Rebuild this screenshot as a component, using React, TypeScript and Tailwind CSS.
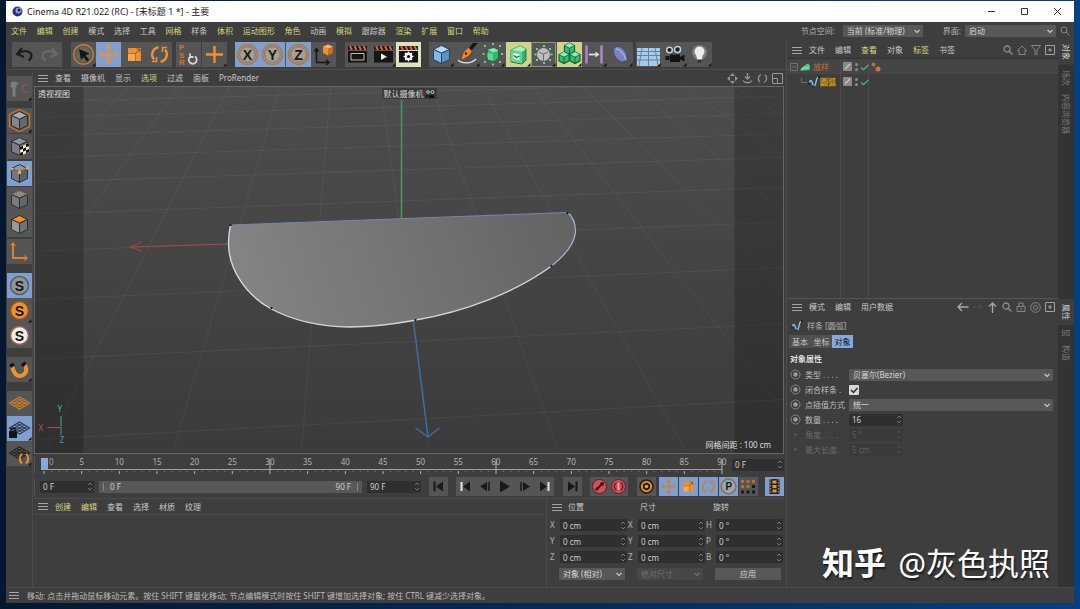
import { ReactNode } from 'react';
import clsx from 'clsx';

type MenuEntry = { label: string; hot?: boolean };

const mainMenu: MenuEntry[] = [
  { label: '文件', hot: true },
  { label: '编辑', hot: true },
  { label: '创建', hot: true },
  { label: '模式' },
  { label: '选择' },
  { label: '工具' },
  { label: '网格', hot: true },
  { label: '样条' },
  { label: '体积', hot: true },
  { label: '运动图形', hot: true },
  { label: '角色', hot: true },
  { label: '动画' },
  { label: '模拟', hot: true },
  { label: '跟踪器' },
  { label: '渲染', hot: true },
  { label: '扩展', hot: true },
  { label: '窗口', hot: true },
  { label: '帮助', hot: true }
];

const viewMenu: MenuEntry[] = [
  { label: '查看' },
  { label: '摄像机' },
  { label: '显示' },
  { label: '选项', hot: true },
  { label: '过滤' },
  { label: '面板' },
  { label: 'ProRender' }
];

const objectMenu: MenuEntry[] = [
  { label: '文件' },
  { label: '编辑' },
  { label: '查看', hot: true },
  { label: '对象' },
  { label: '标签', hot: true },
  { label: '书签' }
];

const materialMenu: MenuEntry[] = [
  { label: '创建', hot: true },
  { label: '编辑', hot: true },
  { label: '查看' },
  { label: '选择' },
  { label: '材质' },
  { label: '纹理' }
];

const attributeMenu: MenuEntry[] = [
  { label: '模式' },
  { label: '编辑' },
  { label: '用户数据' }
];

const ORANGE = '#f0912f';

function Menu({ items, className }: { items: MenuEntry[]; className?: string }) {
  return (
    <nav className={clsx('flex items-center', className ?? 'gap-[10px]')}>
      {items.map((item) => (
        <button
          key={item.label}
          className={clsx(
            'whitespace-nowrap leading-[14px]',
            item.hot ? 'text-[#d3d577]' : 'text-[#c8c8c8]'
          )}
        >
          {item.label}
        </button>
      ))}
    </nav>
  );
}

function Burger() {
  return (
    <button aria-label="面板菜单" className="flex w-[10px] flex-col gap-[2px]">
      <span className="h-px w-full bg-[#a5a5a5]" />
      <span className="h-px w-full bg-[#a5a5a5]" />
      <span className="h-px w-full bg-[#a5a5a5]" />
    </button>
  );
}

function Icon({
  size = 25,
  className,
  children
}: {
  size?: number;
  className?: string;
  children: ReactNode;
}) {
  return (
    <svg
      viewBox={`0 0 ${size} ${size}`}
      width={size}
      height={size}
      fill="none"
      className={clsx('shrink-0', className)}
      aria-hidden="true"
    >
      {children}
    </svg>
  );
}

/* ---------- tool buttons ---------- */

type Tone = 'plain' | 'active' | 'lit' | 'cream' | 'off';

const toneStyle: Record<Tone, string> = {
  plain: 'bg-[#555555]',
  active: 'bg-[#7f9fd0]',
  lit: 'bg-[#d2d28a]',
  cream: 'bg-[#dfe3bd]',
  off: 'bg-[#555555]'
};

function Tool({
  name,
  tone = 'plain',
  more,
  children
}: {
  name: string;
  tone?: Tone;
  more?: boolean;
  children: ReactNode;
}) {
  return (
    <button
      aria-label={name}
      className={clsx('h-[25px] w-[25px] shrink-0', toneStyle[tone])}
    >
      <Icon>
        {children}
        {more && <path d="M24.5 21v3.5H21z" fill="#161616" />}
      </Icon>
    </button>
  );
}

function Cube({
  top,
  left,
  right,
  line = '#26292c'
}: {
  top: string;
  left: string;
  right: string;
  line?: string;
}) {
  return (
    <g stroke={line} strokeWidth=".9" strokeLinejoin="round">
      <path d="M12.5 3.5 20.5 7.5 12.5 11.2 4.5 7.5z" fill={top} />
      <path d="M4.5 7.5 12.5 11.2V21.5L4.5 17.5z" fill={left} />
      <path d="M20.5 7.5 12.5 11.2V21.5L20.5 17.5z" fill={right} />
    </g>
  );
}

function MoveGlyph({ color = ORANGE }: { color?: string }) {
  return (
    <g stroke={color} strokeWidth="2" strokeLinejoin="round">
      <path d="M12.5 5v15M5 12.5h15" />
      <path
        d="M12.5 2 16.5 6.500H8.500zM12.5 23 16.5 18.500H8.500zM2 12.500 6.500 8.500v8zM23 12.500 18.500 8.500v8z"
        fill={color}
        stroke="none"
      />
    </g>
  );
}

function ScaleGlyph() {
  return (
    <g>
      <path d="M6 6h13v13H6z" fill={ORANGE} />
      <path d="M6 12h7v7M13 12l5-5M14.5 7h3.5v3.5" stroke="#8b4a12" strokeWidth="1" />
      <path d="M6 12h7v7H6z" fill="#f9a54c" />
    </g>
  );
}

function RotateGlyph({ color = ORANGE }: { color?: string }) {
  return (
    <g stroke={color} strokeWidth="2.4">
      <path d="M11.500 5.200a7.500 7.500 0 0 0-4.500 12.300M13.500 19.800a7.500 7.500 0 0 0 4.500-12.300" />
      <path d="M5 19.500h4.500V15M20 5.500h-4.500V10" strokeWidth="1.600" />
    </g>
  );
}

function AxisLetter({ letter }: { letter: string }) {
  return (
    <g>
      <circle cx="12.5" cy="12.5" r="10" stroke="#b57838" strokeWidth="1.5" />
      <circle cx="12.5" cy="12.5" r="7.8" fill="#a9a08f" stroke="#8f6d42" />
      <text
        x="12.5"
        y="17.5"
        textAnchor="middle"
        fontSize="14"
        fontWeight="700"
        fontFamily="Liberation Sans, sans-serif"
        fill="#16181c"
      >
        {letter}
      </text>
    </g>
  );
}

function Clapper({ children }: { children: ReactNode }) {
  return (
    <g>
      <path d="M3 9h19v11.5H3z" fill="#151515" />
      <path d="M3 4h19v4H3z" fill="#2a1a15" />
      <path d="M5 4l2 4M9.5 4l2 4M14 4l2 4M18.5 4l2 4" stroke="#d8694a" strokeWidth="1.8" />
      {children}
    </g>
  );
}

function CameraGlyph() {
  return (
    <g>
      <circle cx="7.5" cy="8" r="2.8" fill="#222" stroke="#b9d2e4" strokeWidth="1.5" />
      <circle cx="15.5" cy="7.5" r="3" fill="#222" stroke="#b9d2e4" strokeWidth="1.5" />
      <path d="M8 12.5h10v7.5H8zM18 15l4.5-2.5v7L18 17.5zM3.5 14h4v4h-4z" fill="#141414" />
    </g>
  );
}

function Snap({ ring, fill }: { ring: string; fill: string }) {
  return (
    <g>
      <circle cx="12.5" cy="12.5" r="9" fill={fill} stroke={ring} strokeWidth="1.5" />
      <text
        x="12.5"
        y="17.5"
        textAnchor="middle"
        fontSize="14"
        fontWeight="700"
        fontFamily="Liberation Sans, sans-serif"
        fill="#131313"
      >
        S
      </text>
    </g>
  );
}

function Mesh({ color }: { color: string }) {
  return (
    <path
      d="M2.5 12 12.5 6l10 6-10 6zM5 10.5l10 6M7.5 9l10 6M10 7.5l10 6M5 13.5l10-6M7.5 15l10-6M10 16.5l10-6"
      stroke={color}
      strokeWidth="1.2"
    />
  );
}

function Toolbar() {
  return (
    <div className="flex h-[31px] items-center border-b border-[#4c4c4c] pl-[6px]">
      <div className="flex bg-[#555555]">
        <Tool name="撤销">
          <path d="M10 6 5 12l7 3M5.5 12c6-5 14-3 14 2 0 2-1 3-3 4.5" stroke="#1c1c1c" strokeWidth="2.2" />
        </Tool>
        <Tool name="重做" tone="off">
          <path d="M15 6l5 6-7 3M19.5 12c-6-5-14-3-14 2 0 2 1 3 3 4.5" stroke="#6a6a6a" strokeWidth="2.2" />
        </Tool>
      </div>
      <div className="ml-[9px] flex w-[101px] justify-between bg-[#555555]">
        <Tool name="实时选择" more>
          <circle cx="12.5" cy="12.5" r="9.8" stroke="#c77f35" strokeWidth="1.5" />
          <circle cx="12.5" cy="12.5" r="7.8" fill="#6b6459" />
          <path d="M8 7l10.5 4.5-4 2 3.5 4-2 2-3.5-4.5-2.5 3z" fill="#141414" />
        </Tool>
        <Tool name="移动" tone="active">
          <MoveGlyph color="#dd9448" />
        </Tool>
        <Tool name="缩放">
          <ScaleGlyph />
        </Tool>
        <Tool name="旋转">
          <RotateGlyph />
        </Tool>
      </div>
      <div className="ml-1 flex">
        <Tool name="重置变换">
          <g fontFamily="Liberation Sans, sans-serif" fontSize="8" fontWeight="700" fill="#d0752c">
            <text x="3" y="8">P</text>
            <text x="3" y="15.5">S</text>
            <text x="3" y="23">R</text>
          </g>
          <path d="M14.5 14.5a4 4 0 1 0 4.5 0M14 11.5v3.5h3.5" stroke="#d6d6d6" strokeWidth="1.8" />
        </Tool>
      </div>
      <div className="ml-px flex">
        <Tool name="坐标系统" more>
          <path d="M12.5 4v17M4 12.5h17" stroke={ORANGE} strokeWidth="2.4" />
        </Tool>
      </div>
      <div className="ml-2 flex w-[101px] justify-between bg-[#4a5564]">
        <Tool name="锁定 X 轴" tone="active">
          <AxisLetter letter="X" />
        </Tool>
        <Tool name="锁定 Y 轴" tone="active">
          <AxisLetter letter="Y" />
        </Tool>
        <Tool name="锁定 Z 轴" tone="active">
          <AxisLetter letter="Z" />
        </Tool>
        <Tool name="坐标系">
          <path d="M5.5 7v13.5H17M3.5 9.5 5.5 6.5l2 3M15 18l3 2.5-3 2.5" stroke="#171717" strokeWidth="1.5" />
          <path d="M17 2.5l5 2-5 2.5-5-2.5z" fill="#ffb45f" />
          <path d="M12 4.5 17 7v6.5l-5-2.5z" fill="#f0912f" />
          <path d="M22 4.5 17 7v6.5l5-2.5z" fill="#c96e1a" />
        </Tool>
      </div>
      <div className="ml-[9px] flex w-[76px] justify-between bg-[#555555]">
        <Tool name="渲染活动视图">
          <Clapper>
            <path d="M6 11.5h13v6.5H6z" stroke="#c9b9ad" />
          </Clapper>
        </Tool>
        <Tool name="渲染到图片查看器" more>
          <Clapper>
            <path d="M10 11.5l6 3.2-6 3.3z" fill="#f2f2f2" />
          </Clapper>
        </Tool>
        <Tool name="编辑渲染设置" tone="cream">
          <Clapper>
            <circle cx="12.5" cy="14.5" r="3" stroke="#fff" strokeWidth="2" />
            <path d="M12.5 9.5v10M7.5 14.5h10M9 11l7 7M16 11l-7 7" stroke="#fff" strokeWidth="1.2" />
            <circle cx="12.5" cy="14.5" r="1.6" fill="#151515" />
          </Clapper>
        </Tool>
      </div>
      <div className="ml-2 flex w-[204px] justify-between bg-[#555555]">
        <Tool name="立方体" more>
          <Cube top="#b3dcf8" left="#7db8e8" right="#5794cb" line="#24425c" />
        </Tool>
        <Tool name="样条画笔" more>
          <path d="M14 6l4-5h5l-7 8z" fill="#171717" />
          <path d="M13.5 5.5l3.5 3.5c-1 4-5 7-11 9 1-6 3-10 7.5-12.5z" fill="#e8873a" stroke="#5d3110" strokeWidth=".7" />
          <circle cx="11" cy="11.5" r="1.2" fill="#3b1f0a" />
          <path d="M3 18c4 4 13 4 18-1" stroke="#dfe6ea" strokeWidth="1.2" />
        </Tool>
        <Tool name="细分曲面" more>
          <path d="M8 7.5 14 6l4.5 2.5V16l-4 3.5-6.5-1.5-1.5-4z" fill="#35b56d" stroke="#1b6f45" />
          <path d="M8 7.5 14 6l4.5 2.5L13 10.5z" fill="#86e8ac" />
          <path d="M7.5 10.5l5.5 1.5v7l-5-1.5z" fill="#5fd692" />
          <path d="M4 4h2M19 4h2M4 20h2M19 20h2M12 2h2M12 22.5h2M2.5 12h2M21 12h2" stroke="#77c794" strokeWidth="1.8" />
        </Tool>
        <Tool name="挤压" tone="lit" more>
          <path d="M5 8l9-4 6 3v11l-4 4-11-2z" fill="#2fb36d" stroke="#1c7a49" />
          <path d="M5 8l11 2 4-3-6-3z" fill="#a5f0c0" />
          <path d="M5 8l11 2v11.500L5 19.500z" fill="#5fd692" />
          <path d="M7.500 11l6 1v6l-6-1z" fill="#e8fff0" />
          <path d="M8 13.500l2.500 2 3-1.500" stroke="#14663b" strokeWidth="1.200" />
        </Tool>
        <Tool name="体积生成" more>
          <circle cx="12.5" cy="12.5" r="6.5" fill="#bdbdbd" />
          <path d="M8 10l4.5 2 4.5-2M12.5 12v7" stroke="#6b6b6b" />
          <path d="M12 4h2M5 7h2M18 7h2M3.5 12.5h2M19.5 12.5h2M5 18h2M18 18h2M12 21h2" stroke="#5fdc93" strokeWidth="2" />
          <path d="M.5.5h24v24H.5z" stroke="#8f9a78" />
        </Tool>
        <Tool name="克隆" tone="lit" more>
          {['translate(5.5 0) scale(.56)', 'translate(0 9) scale(.56)', 'translate(11 9) scale(.56)'].map((t) => (
            <g key={t} transform={t}>
              <path d="M12.5 2l9 4.5v11l-9 5-9-5v-11z" fill="#35bd74" stroke="#165e38" strokeWidth="2" />
              <path d="M12.5 2l9 4.5-9 4.5-9-4.5z" fill="#8ff0b5" />
              <path d="M3.5 6.5l9 4.5v11.5M12.5 11l9-4.5" stroke="#165e38" strokeWidth="1.6" />
            </g>
          ))}
        </Tool>
        <Tool name="域" more>
          <path d="M4.500 3.500v18M19.500 3.500v18" stroke="#b083d3" strokeWidth="2.500" />
          <path d="M7 12.5h8" stroke="#dcdcdc" strokeWidth="1.8" />
          <path d="M13.500 9.500l4 3-4 3z" fill="#dcdcdc" />
        </Tool>
        <Tool name="变形器" more>
          <path d="M7 5c4-2 8 1 10.5 5 2 3.5 2 8-.5 9.5-3 1.5-7-1-9.5-4.5C5 11.5 4.5 6.5 7 5z" fill="#7584bb" stroke="#3f4a7c" />
          <path d="M8 7c4 0 9 6 10 11" stroke="#a2afdd" strokeWidth="1.5" />
        </Tool>
      </div>
      <div className="ml-[3px] flex w-[76px] justify-between bg-[#555555]">
        <Tool name="地面" more>
          <path d="M1 6h23v18H1z" fill="#a9cbe9" />
          <path d="M1 9.5h23M1 13.5h23M1 18h23M6 6 3 24M12.5 6v18M19 6l3 18" stroke="#5d82a7" />
        </Tool>
        <Tool name="摄像机" more>
          <CameraGlyph />
        </Tool>
        <Tool name="灯光" more>
          <circle cx="12.5" cy="10.5" r="7.5" fill="#7c7c7c" />
          <path d="M12.5 4.5a5 5 0 0 1 3.5 8.5l-1.5 5h-4L9 13a5 5 0 0 1 3.5-8.5z" fill="#ececec" />
          <path d="M10.5 17.5h4v3h-4z" fill="#333" />
        </Tool>
      </div>
    </div>
  );
}

function Palette() {
  return (
    <aside className="flex w-[27px] shrink-0 flex-col items-start border-r border-[#4a4a4a] pl-px pt-[6px]">
      <Tool name="转为可编辑对象" tone="off" more>
        <path d="M3.5 8.5c0-4 8-4 8 0h-2v3h-1v9h-3v-9h-2z" fill="#7d7d7d" />
        <path d="M21 9a4 4 0 1 0 0 7" stroke="#735c58" strokeWidth="2" />
      </Tool>
      <div className="mt-[7px] flex flex-col gap-px">
        <Tool name="模型" more>
          <path d="M12.5 1.5 22.5 6.5v12l-10 5-10-5v-12z" stroke="#c5752c" strokeWidth="1.3" />
          <Cube top="#a6acb0" left="#80868a" right="#64696c" />
        </Tool>
        <Tool name="纹理">
          <Cube top="#8c9296" left="#777d80" right="#64696c" />
          <g transform="translate(13 13) skewY(-24)">
            <path d="M0 0h9v9H0z" fill="#f0f0f0" stroke={ORANGE} strokeWidth=".6" />
            <path d="M0 0h3v3H0zM6 0h3v3H6zM3 3h3v3H3zM0 6h3v3H0zM6 6h3v3H6z" fill="#111" />
          </g>
        </Tool>
      </div>
      <div className="mt-[2px] flex flex-col">
        <Tool name="点" tone="active">
          <Cube top="#8f979e" left="#727a80" right="#5b6267" />
          <path d="M4.5 7.5l8 3.7L20.5 7" stroke="#a5722f" />
          <path d="M19 5.5h3v3h-3zM11 10h3v3h-3zM4 7h2v2H4z" fill="#f5a742" />
        </Tool>
        <div className="mt-px flex flex-col">
          <Tool name="边">
            <Cube top="#868b8d" left="#777c7e" right="#62676a" />
            <path d="M4.5 7.5 12.5 3.5 20.5 7.5" stroke="#a5682d" />
          </Tool>
        </div>
        <Tool name="多边形">
          <Cube top="#f58b1e" left="#969b9e" right="#6d7275" />
        </Tool>
      </div>
      <div className="mt-[2px] flex">
        <Tool name="启用轴心">
          <path d="M6 4v15h14" stroke="#d98333" strokeWidth="2" />
          <path d="M3.5 7 6 3.5 8.5 7M17 16.5l3.5 2.5-3.5 2.5" stroke="#d98333" />
        </Tool>
      </div>
      <div className="mt-[9px] flex flex-col">
        <Tool name="视窗独显关闭" tone="active">
          <Snap ring="#55606b" fill="#8f9496" />
        </Tool>
        <Tool name="视窗独显" more>
          <Snap ring="#8c5420" fill="#f0912f" />
        </Tool>
        <Tool name="自动独显">
          <Snap ring="#a05c55" fill="#efefe8" />
        </Tool>
      </div>
      <div className="mt-[9px] flex">
        <Tool name="启用捕捉" more>
          <path d="M5 9c2 8 5.5 11.5 10 9.5s6-6 2-11.5" stroke="#f0912f" strokeWidth="4" />
          <path d="M3 9.5l4-2.5M15 9l3.5-3.5" stroke="#161616" strokeWidth="3.5" />
        </Tool>
      </div>
      <div className="mt-[9px] flex flex-col">
        <Tool name="工作平面">
          <Mesh color="#d07d2c" />
        </Tool>
        <Tool name="锁定工作平面" tone="active" more>
          <Mesh color="#2d3947" />
          <path d="M2 15h8v7H2z" fill="#12151a" />
          <path d="M4 15v-2.5h4V15" stroke="#12151a" strokeWidth="1.5" />
        </Tool>
        <Tool name="平直工作平面" more>
          <Mesh color="#242424" />
          <path d="M15 13c-3 2-3 7 0 9.5M19 13c3 2 3 7 0 9.5" stroke="#f0912f" strokeWidth="2" />
        </Tool>
      </div>
    </aside>
  );
}

/* ---------- viewport ---------- */

const gridRows = [420, 342, 284, 237, 201, 170, 146, 125, 107, 92];
const gridCols = Array.from({ length: 17 }, (_, i) => i - 6);

function Viewport() {
  return (
    <div className="relative min-h-[300px] flex-1 overflow-hidden border border-[#666666] bg-[#444444]">
      <svg
        viewBox="35 87 749 366"
        preserveAspectRatio="xMidYMid slice"
        className="absolute inset-0 h-full w-full"
        fill="none"
      >
        <defs>
          <linearGradient id="backdrop" x1="0" y1="0" x2="0" y2="1">
            <stop offset="0" stopColor="#4d4d4d" />
            <stop offset="1" stopColor="#3b3b3b" />
          </linearGradient>
          <linearGradient id="face" x1="0" y1=".1" x2="1" y2="0">
            <stop offset="0" stopColor="#838383" />
            <stop offset=".5" stopColor="#737373" />
            <stop offset="1" stopColor="#626262" />
          </linearGradient>
        </defs>
        <rect x="35" y="87" width="749" height="366" fill="url(#backdrop)" />
        <g stroke="#ffffff" strokeOpacity=".05">
          {gridRows.map((y) => {
            const slope = -0.02 - 0.00008 * y;
            return (
              <line key={y} x1={35} y1={y - slope * 365} x2={784} y2={y + slope * 384} />
            );
          })}
          {gridCols.map((k) => (
            <line key={k} x1={350} y1={-150} x2={302 + 128 * k} y2={450} />
          ))}
        </g>
        <path d="M35 87h49v366H35zM735 87h49v366h-49z" fill="#000" fillOpacity=".2" />
        <path d="M402 100v118" stroke="#479a5e" strokeWidth="1.5" />
        <path d="M229 244 131 247M142 242l-11 5 11 4" stroke="#a34a48" />
        <path
          d="M231 225 568 212.5C573 216 576 223 576 232C575 243 566 255 552 266C515 293 465 312 414 320.5C392 324.5 370 327 350 327C318 326.5 292 320 271 308.5C245 294 229 268 229 243C229 236 230 230 231 225Z"
          fill="url(#face)"
        />
        <path d="M231 225 568 212.5" stroke="#7587b3" />
        <path
          d="M568 212.5C573 216 576 223 576 232C575 243 566 255 552 266"
          stroke="#a9b9dc"
          strokeWidth="1.2"
        />
        <path
          d="M552 266C515 293 465 312 414 320.5C392 324.5 370 327 350 327C318 326.5 292 320 271 308.5C245 294 229 268 229 243C229 236 230 230 231 225"
          stroke="#d4d6dc"
          strokeWidth="1.4"
        />
        <path d="M230 224h2v2h-2zM567 212h2v2h-2zM551 265h2v2h-2zM415 319h2v2h-2zM271 307h2v2h-2z" fill="#1d1d1d" />
        <path d="M414 321 428.5 437M416 428l12.5 9 11.5-9" stroke="#3d73ab" strokeWidth="1.3" />
        <path d="M61.5 426.5V416" stroke="#4cae6b" />
        <path d="M61 427.5H48" stroke="#b84b4b" />
        <path d="M61.5 427v8" stroke="#4a8ac0" />
        <g fontFamily="Noto Sans, sans-serif" fontSize="8">
          <text x="58" y="412" fill="#4fbd70">Y</text>
          <text x="39" y="431" fill="#c24b4b">X</text>
          <text x="60" y="443" fill="#4b93cf">Z</text>
        </g>
      </svg>
      <span className="absolute left-[3px] top-px text-[#dedede]">透视视图</span>
      <div className="absolute inset-x-0 top-px flex justify-center">
        <span className="flex items-center gap-px bg-[#3a3a3a] px-[2px] leading-[11px] text-[#d8d8d8]">
          默认摄像机
          <Icon size={10}>
            <circle cx="3" cy="3" r="1.3" stroke="#a9cfe6" />
            <circle cx="7.5" cy="3" r="1.5" stroke="#a9cfe6" />
            <path d="M4 6h5v3H4zM1 6h2v2H1z" fill="#0f0f0f" />
          </Icon>
        </span>
      </div>
      <span className="absolute bottom-[2px] right-3 text-[#dedede]">网格间距 : 100 cm</span>
    </div>
  );
}

/* ---------- form bits ---------- */

function NumberField({
  id,
  label,
  value,
  disabled,
  className
}: {
  id?: string;
  label?: string;
  value: string;
  disabled?: boolean;
  className?: string;
}) {
  return (
    <span
      className={clsx(
        'flex h-3 items-center',
        disabled ? 'bg-[#3a3a3a] text-[#5f5f5f]' : 'bg-[#2f2f2f] text-[#d0d0d0]',
        className
      )}
    >
      <input
        id={id}
        aria-label={label}
        defaultValue={value}
        disabled={disabled}
        className="h-full w-full min-w-0 bg-transparent px-[3px] outline-none"
      />
      <Icon size={8} className="h-[11px]">
        <path d="M2 2.5 4 .5l2 2M2 5.5l2 2 2-2" stroke={disabled ? '#505050' : '#777777'} />
      </Icon>
    </span>
  );
}

function Dropdown({
  id,
  label,
  value,
  disabled,
  className
}: {
  id?: string;
  label?: string;
  value: string;
  disabled?: boolean;
  className?: string;
}) {
  return (
    <span className={clsx('relative flex h-3', className)}>
      <select
        id={id}
        aria-label={label}
        disabled={disabled}
        className={clsx(
          'h-full w-full appearance-none rounded-[1px] px-1 leading-3 outline-none',
          disabled ? 'bg-[#474747] text-[#6f6f6f]' : 'bg-[#585858] text-[#d6d6d6]'
        )}
      >
        <option>{value}</option>
      </select>
      <Icon size={8} className="pointer-events-none absolute right-[2px] top-[2px]">
        <path d="M1.5 3 4 5.5 6.5 3" stroke={disabled ? '#6f6f6f' : '#c8c8c8'} strokeWidth="1.2" />
      </Icon>
    </span>
  );
}

/* ---------- timeline ---------- */

const frames = Array.from({ length: 91 }, (_, i) => i);
const frameLabels = Array.from({ length: 19 }, (_, i) => i * 5);

function Ruler() {
  return (
    <div className="flex h-[21px] items-center">
      <div className="h-4 w-[2px] border-l border-[#555555]" />
      <div className="relative ml-2 mr-[6px] h-[21px] flex-1">
        <svg className="absolute inset-x-0 bottom-0 h-full w-full overflow-visible">
          <line x1="-3" y1="15.5" x2="100%" y2="15.5" stroke="#a0a0a0" />
          {frames.map((f) => (
            <line
              key={f}
              x1={`${(f / 90) * 100}%`}
              x2={`${(f / 90) * 100}%`}
              y1={f && f % 30 === 0 ? 5 : 17}
              y2={f % 5 === 0 ? 20 : 18}
              stroke={f % 5 === 0 ? '#b4b4b4' : '#7c7c7c'}
            />
          ))}
          <rect x="-3" y="4" width="7" height="12" fill="#86a9dc" />
        </svg>
        <div className="relative flex justify-between pt-[2px] text-[#b4b4b4]">
          {frameLabels.map((f) => (
            <span key={f} className={clsx('flex w-0', f > 0 && 'justify-center')}>
              {/* frame 0 sits beside the playhead */}
              <span className={clsx(f === 0 && 'pl-[5px] text-[#8fa3c2]')}>{f}</span>
            </span>
          ))}
        </div>
      </div>
      <NumberField label="当前帧" value="0 F" className="ml-1 w-[52px]" />
    </div>
  );
}

function Key({
  name,
  tone = 'plain',
  children
}: {
  name: string;
  tone?: Tone;
  children: ReactNode;
}) {
  return (
    <button
      aria-label={name}
      className={clsx('flex h-[19px] flex-1 items-center justify-center', toneStyle[tone])}
    >
      <Icon size={19}>{children}</Icon>
    </button>
  );
}

function Transport() {
  return (
    <div className="flex h-[23px] items-center">
      <div className="mr-1 h-4 w-[2px] border-l border-[#555555]" />
      <NumberField label="起始帧" value="0 F" className="w-[54px]" />
      <div className="ml-[5px] flex h-3 flex-1 items-center justify-between bg-[#585858] px-1 text-[#cccccc]">
        <span className="border-l border-[#888888] pl-[6px] leading-2">0 F</span>
        <span className="border-r border-[#888888] pr-[6px] leading-2">90 F</span>
      </div>
      <NumberField label="结束帧" value="90 F" className="ml-[5px] w-[54px]" />
      <div className="ml-2 flex w-[18px]">
        <Key name="转到开始">
          <path d="M14 4.5v10l-7-5z" fill="#191919" />
          <path d="M5.5 4.5v10" stroke="#191919" strokeWidth="2" />
        </Key>
      </div>
      <div className="ml-[9px] flex w-[98px]">
        <Key name="上一关键帧">
          <path d="M14 4.5v10l-7-5z" fill="#191919" />
          <path d="M5.5 5v9" stroke="#e6e6e6" strokeWidth="2" />
        </Key>
        <Key name="上一帧">
          <path d="M11 5v9L4 9.5z" fill="#191919" />
          <path d="M13 5v9" stroke="#191919" strokeWidth="1.5" />
        </Key>
        <Key name="播放">
          <path d="M5 3.5v12l10-6z" fill="#191919" />
        </Key>
        <Key name="下一帧">
          <path d="M8 5v9l7-4.5z" fill="#191919" />
          <path d="M6 5v9" stroke="#191919" strokeWidth="1.5" />
        </Key>
        <Key name="下一关键帧">
          <path d="M5 4.5v10l7-5z" fill="#191919" />
          <path d="M13.5 5v9" stroke="#e6e6e6" strokeWidth="2" />
        </Key>
      </div>
      <div className="ml-[9px] flex w-[18px]">
        <Key name="转到结束">
          <path d="M5 4.5v10l7-5z" fill="#191919" />
          <path d="M13.5 4.5v10" stroke="#191919" strokeWidth="2" />
        </Key>
      </div>
      <div className="ml-[9px] flex w-[38px]">
        <Key name="记录活动对象">
          <circle cx="9.5" cy="9.5" r="7" fill="#d94f57" stroke="#5c1f22" />
          <path d="M6.5 12.5l5-5" stroke="#3a1517" strokeWidth="2" />
          <circle cx="12" cy="7" r="2" fill="#3a1517" />
          <circle cx="6.8" cy="12" r="1.5" fill="#3a1517" />
        </Key>
        <Key name="自动关键帧">
          <circle cx="9.5" cy="9.5" r="7" fill="#d94f57" stroke="#5c1f22" />
          <path d="M7.5 5.5c-3 2-3 6 0 8M11.5 5.5c3 2 3 6 0 8" stroke="#5c1f22" strokeWidth="1.4" />
          <path d="M9.5 6v7" stroke="#f6b9b9" strokeWidth="1.5" />
        </Key>
      </div>
      <div className="ml-[9px] flex w-[18px]">
        <Key name="关键帧选集">
          <circle cx="9.5" cy="9.5" r="6.5" fill="#d68c35" stroke="#2a1c0e" strokeWidth="1.5" />
          <path d="M9.5 5.5l3.5 2v4l-3.5 2-3.5-2v-4z" fill="#251a10" />
          <circle cx="9.5" cy="9.5" r="1.8" fill="#e9a14c" />
        </Key>
      </div>
      <div className="ml-1 flex w-[98px] gap-px">
        <Key name="位置" tone="active">
          <g transform="scale(.76)">
            <MoveGlyph color="#c08446" />
          </g>
        </Key>
        <Key name="缩放" tone="active">
          <g transform="scale(.76)">
            <ScaleGlyph />
          </g>
        </Key>
        <Key name="旋转" tone="active">
          <g transform="scale(.76)">
            <RotateGlyph color="#c08446" />
          </g>
        </Key>
        <Key name="参数" tone="active">
          <circle cx="9.5" cy="9.5" r="7.5" stroke="#9f6a31" strokeWidth="1.3" />
          <circle cx="9.5" cy="9.5" r="5.8" fill="#9fa7ae" />
          <text
            x="9.8"
            y="13"
            textAnchor="middle"
            fontSize="10"
            fontWeight="700"
            fontFamily="Liberation Sans, sans-serif"
            fill="#14171c"
          >
            P
          </text>
        </Key>
        <Key name="点级别动画">
          <path d="M2 4.5h15" stroke="#b36f2e" strokeWidth="3" strokeDasharray="3 2.5" />
          <path d="M2 9.5h9" stroke="#b36f2e" strokeWidth="3" strokeDasharray="3 2.5" />
          <path d="M13 9.5h3M2 15h15" stroke="#191919" strokeWidth="3" strokeDasharray="3 2.5" />
        </Key>
      </div>
      <div className="ml-[8px] flex w-[19px]">
        <Key name="播放模式" tone="active">
          <path d="M4.5 2h10v15h-10z" fill="#272014" />
          <path d="M7.5 3.5h4v3h-4zM7.5 8h4v3h-4zM7.5 12.5h4v3h-4z" fill="#d99a42" />
          <path d="M5.7 2v15M13.3 2v15" stroke="#d99a42" strokeDasharray="1.5 1.5" />
        </Key>
      </div>
    </div>
  );
}

const coordinateRows = [
  ['X', '0 cm', 'X', '0 cm', 'H', '0 °'],
  ['Y', '0 cm', 'Y', '0 cm', 'P', '0 °'],
  ['Z', '0 cm', 'Z', '0 cm', 'B', '0 °']
];

function Coordinates() {
  return (
    <section className="w-[238px] shrink-0 border-l border-[#4d4d4d] pl-[3px]">
      <div className="flex h-4 items-center text-[#c8c8c8]">
        <div className="flex w-[90px] items-center gap-[6px] pl-[2px]">
          <Burger />
          <span>位置</span>
        </div>
        <span className="w-[73px]">尺寸</span>
        <span>旋转</span>
      </div>
      <div className="mt-1 flex flex-col gap-1">
        {coordinateRows.map((row) => (
          <div key={row[0]} className="flex items-center text-[#b5b5b5]">
            {[0, 2, 4].map((i) => (
              <label key={i} className="flex w-[78px] items-center">
                <span className="w-[10px]">{row[i]}</span>
                <NumberField value={row[i + 1]} className="w-[67px]" />
              </label>
            ))}
          </div>
        ))}
      </div>
      <div className="mt-[5px] flex gap-3 pl-[9px]">
        <Dropdown label="坐标模式" value="对象 (相对)" className="w-[66px]" />
        <Dropdown label="尺寸模式" value="绝对尺寸" disabled className="w-[66px]" />
        <button className="h-3 w-[66px] rounded-[1px] bg-[#585858] leading-3 text-[#d0d0d0]">应用</button>
      </div>
    </section>
  );
}

/* ---------- right column ---------- */

function SplineIcon() {
  return (
    <Icon size={12}>
      <path d="M1 7.5C2.5 3 3.5 4 4.5 7.5S7 11 8 6s1.5-4.5 3.500-5" stroke="#8fc3e6" strokeWidth="1.300" />
      <path d="M0 6.5h2v2H0zM10 0h2v2h-2zM4.5 9.5h2v2h-2z" fill="#14232e" />
    </Icon>
  );
}

function RowFlags() {
  return (
    <span className="flex items-center gap-[3px]">
      <Icon size={9}>
        <path d="M0 0h9v9H0z" fill="#8a8a8a" />
        <path d="M2 7l5-5" stroke="#c9c9c9" strokeWidth="1.2" />
      </Icon>
      <span className="flex w-[3px] flex-col gap-[2px]">
        <span className="h-[3px] rounded-full bg-[#8b8b8b]" />
        <span className="h-[3px] rounded-full bg-[#8b8b8b]" />
      </span>
      <Icon size={8}>
        <path d="M0 4.5 2.5 6.5 7.5 2" stroke="#45b276" strokeWidth="1.4" />
      </Icon>
    </span>
  );
}

function ObjectManager() {
  return (
    <section className="flex min-h-[200px] flex-1 flex-col border-b border-[#555555] pt-[3px]">
      <div className="flex h-[17px] items-center border-b border-[#343434] pl-[5px] pr-[3px]">
        <Burger />
        <div className="ml-[7px] flex-1">
          <Menu items={objectMenu} />
        </div>
        <div className="flex gap-1">
          <Icon size={10}>
            <circle cx="4" cy="4" r="3" stroke="#8a8a8a" strokeWidth="1.3" />
            <path d="M6 6l3.5 3.5" stroke="#8a8a8a" strokeWidth="1.5" />
          </Icon>
          <Icon size={10}>
            <path d="M.5 5.5 5 1l4.5 4.5H8v4H2v-4z" stroke="#858585" />
          </Icon>
          <Icon size={10}>
            <path d="M.5.5h9L6 5v4.5H4V5z" stroke="#858585" />
          </Icon>
          <Icon size={10}>
            <path d="M.5.5h9v9h-9zM3 5h4M5 3v4" stroke="#a0a0a0" />
          </Icon>
        </div>
      </div>
      <div className="flex flex-1">
        <ul className="w-[54px] border-r border-[#4a4a4a]">
          <li className="flex h-[15px] items-center gap-[2px] bg-[#454545] pl-[3px] text-[#c26f26]">
            <Icon size={8}>
              <path d="M.5.5h7v7h-7zM2 4h4" stroke="#707070" />
            </Icon>
            <Icon size={10}>
              <path d="M0 8.5c1-2.5 4-5.5 8-7L10 3.5 9.5 8 5 8.500z" fill="#46c986" />
              <path d="M1 8c2-2 5-3 8-2" stroke="#a5efc6" />
            </Icon>
            <span className="ml-px">放样</span>
          </li>
          <li className="flex h-[15px] items-center pl-[13px]">
            <Icon size={8}>
              <path d="M1.5 0v4.5H7" stroke="#707070" />
            </Icon>
            <SplineIcon />
            <span className="bg-[#5f4b16] leading-[10px] text-[#e9bd3a]">圆弧</span>
          </li>
        </ul>
        <ul className="w-[28px] border-r border-[#4a4a4a]">
          <li className="flex h-[15px] items-center bg-[#454545] pl-[2px]">
            <RowFlags />
          </li>
          <li className="flex h-[15px] items-center pl-[2px]">
            <RowFlags />
          </li>
        </ul>
        <div className="flex-1">
          <div className="flex h-[15px] items-center bg-[#454545] pl-[2px]">
            <Icon size={10}>
              <circle cx="2.5" cy="2.5" r="2" fill="#c46a33" />
              <circle cx="7" cy="7" r="2.5" fill="#d0743a" />
            </Icon>
          </div>
        </div>
      </div>
    </section>
  );
}

function Bullet({ muted }: { muted?: boolean }) {
  return (
    <Icon size={11}>
      {muted ? (
        <circle cx="5.5" cy="5.5" r="1.5" fill="#5a5a5a" />
      ) : (
        <>
          <circle cx="5.5" cy="5.5" r="4.5" stroke="#858585" />
          <circle cx="5.5" cy="5.5" r="2.2" fill="#9c9c9c" />
        </>
      )}
    </Icon>
  );
}

function AttributeRow({
  id,
  label,
  muted,
  children
}: {
  id: string;
  label: string;
  muted?: boolean;
  children: ReactNode;
}) {
  return (
    <div className="flex h-[15px] items-center pl-[3px] pr-[5px]">
      <Bullet muted={muted} />
      <label
        htmlFor={id}
        className={clsx(
          'ml-1 w-[44px] whitespace-nowrap',
          muted ? 'text-[#6a6a6a]' : 'text-[#bdbdbd]'
        )}
      >
        {label}
      </label>
      {children}
    </div>
  );
}

function AttributeManager() {
  return (
    <section className="min-h-[288px]">
      <div className="flex h-4 items-center pl-[5px] pr-[3px]">
        <Burger />
        <div className="ml-[7px] flex-1">
          <Menu items={attributeMenu} />
        </div>
        <div className="flex items-center gap-1">
          <Icon size={12}>
            <path d="M11.5 6H1M5 2 1 6l4 4" stroke="#a8a8a8" strokeWidth="1.4" />
          </Icon>
          <Icon size={10}>
            <path d="M0 5h9M6 2l3 3-3 3" stroke="#505050" />
          </Icon>
          <Icon size={11}>
            <path d="M5.5 11V1M2 4.5 5.5 1 9 4.5" stroke="#a8a8a8" strokeWidth="1.4" />
          </Icon>
          <Icon size={10}>
            <circle cx="4" cy="4" r="3" stroke="#8a8a8a" strokeWidth="1.3" />
            <path d="M6 6l3.5 3.5" stroke="#8a8a8a" strokeWidth="1.5" />
          </Icon>
          <Icon size={10}>
            <path d="M1 4.5h8v5H1zM3 4.5V1h4v3.5M5 6v2" stroke="#858585" />
          </Icon>
          <Icon size={11}>
            <circle cx="5.5" cy="5.5" r="4.8" stroke="#858585" />
            <circle cx="5.5" cy="5.5" r="2" stroke="#858585" />
          </Icon>
          <Icon size={10}>
            <path d="M.5.5h9v9h-9zM3 5h4M5 3v4" stroke="#a0a0a0" />
          </Icon>
        </div>
      </div>
      <div className="mt-[3px] flex h-4 items-center gap-1 pl-1 text-[#b0b0b0]">
        <SplineIcon />
        样条 [圆弧]
      </div>
      <div role="tablist" className="mt-px flex pl-[2px]">
        <button role="tab" className="h-[13px] w-[22px] bg-[#505050] leading-[13px] text-[#c4c4c4]">基本</button>
        <button role="tab" className="h-[13px] w-[21px] bg-[#505050] leading-[13px] text-[#c4c4c4]">坐标</button>
        <button role="tab" aria-selected className="h-[13px] w-[21px] bg-[#86a8dc] leading-[13px] text-[#10151d]">
          对象
        </button>
      </div>
      <h2 className="mb-px mt-1 pl-[3px] font-bold leading-[14px] text-[#dddddd]">对象属性</h2>
      <AttributeRow id="type" label="类型 . . . .">
        <Dropdown id="type" value="贝塞尔(Bezier)" className="flex-1" />
      </AttributeRow>
      <AttributeRow id="closed" label="闭合样条 .">
        <span className="relative flex">
          <input
            id="closed"
            type="checkbox"
            defaultChecked
            className="h-[10px] w-[10px] appearance-none rounded-[1px] bg-[#d9d9d9]"
          />
          <Icon size={10} className="pointer-events-none absolute">
            <path d="M2 5l2.5 2.5L8.5 3" stroke="#2a2a2a" strokeWidth="1.5" />
          </Icon>
        </span>
      </AttributeRow>
      <AttributeRow id="interpolation" label="点插值方式">
        <Dropdown id="interpolation" value="统一" className="flex-1" />
      </AttributeRow>
      <AttributeRow id="count" label="数量 . . . .">
        <NumberField id="count" value="16" className="w-[54px]" />
      </AttributeRow>
      <AttributeRow id="angle" label="角度 . . . ." muted>
        <NumberField id="angle" value="5 °" disabled className="w-[54px]" />
      </AttributeRow>
      <AttributeRow id="length" label="最大长度 ." muted>
        <NumberField id="length" value="5 cm" disabled className="w-[54px]" />
      </AttributeRow>
    </section>
  );
}

function SideTab({ children, active, className }: { children: ReactNode; active?: boolean; className?: string }) {
  return (
    <button
      className={clsx(
        'flex w-full items-center justify-center [text-orientation:sideways] [writing-mode:vertical-rl]',
        active ? 'bg-[#3e3e3e] text-[#cfcfcf]' : 'text-[#7a7a7a]',
        className
      )}
    >
      {children}
    </button>
  );
}

/* ---------- window ---------- */

export default function App() {
  return (
    <div className="flex min-h-screen flex-col bg-gradient-to-r from-[#04172f] via-[#052a55] to-[#064080] pb-[6px] pl-[6px] pr-[6px] pt-px text-[8px] leading-3 [font-family:'Noto_Sans','Noto_Sans_CJK_SC',sans-serif]">
      <div className="flex flex-1 flex-col bg-[#3e3e3e]">
        <header className="flex h-[21px] items-center justify-between bg-white pl-[6px] pr-3 text-[9px] text-[#1c1c1c]">
          <div className="flex items-center gap-1">
            <Icon size={11}>
              <circle cx="5.5" cy="5.5" r="5" fill="#27356f" />
              <circle cx="6.5" cy="4.5" r="3" fill="#8ea0d8" />
              <circle cx="7" cy="4" r="1.5" fill="#1a2350" />
            </Icon>
            <h1 className="whitespace-nowrap">Cinema 4D R21.022 (RC) - [未标题 1 *] - 主要</h1>
          </div>
          <div className="flex gap-6">
            <button aria-label="最小化">
              <Icon size={9}>
                <path d="M1 4.5h7" stroke="#333" />
              </Icon>
            </button>
            <button aria-label="最大化">
              <Icon size={9}>
                <path d="M1.5 1.5h6v6h-6z" stroke="#333" />
              </Icon>
            </button>
            <button aria-label="关闭">
              <Icon size={9}>
                <path d="M1 1l7 7M8 1 1 8" stroke="#333" />
              </Icon>
            </button>
          </div>
        </header>

        <div className="flex h-[17px] items-center justify-between pl-[5px] pr-1">
          <Menu items={mainMenu} className="w-[478px] justify-between" />
          <div className="flex items-center text-[#b5b5b5]">
            <label htmlFor="nodespace">节点空间:</label>
            <Dropdown id="nodespace" value="当前 (标准/物理)" className="ml-2 w-[80px]" />
            <label htmlFor="layout" className="ml-5">界面:</label>
            <Dropdown id="layout" value="启动" className="ml-1 w-[91px]" />
            <Icon size={10} className="ml-1">
              <circle cx="4" cy="4" r="3" stroke="#8a8a8a" />
              <path d="M6 6l3.5 3.5" stroke="#8a8a8a" />
            </Icon>
          </div>
        </div>

        <div className="flex flex-1">
          <main className="flex min-w-0 flex-1 flex-col">
            <Toolbar />
            <div className="flex flex-1">
              <Palette />
              <div className="flex min-w-0 flex-1 flex-col pl-px pr-[2px]">
                <div className="flex h-4 items-center justify-between pl-1 pr-px">
                  <div className="flex items-center gap-[7px]">
                    <Burger />
                    <Menu items={viewMenu} />
                  </div>
                  <div className="flex gap-1">
                    <Icon size={11}>
                      <path d="M5.5 0 8 3H3zM5.5 11 8 8H3zM0 5.5 3 3v5zM11 5.5 8 3v5z" fill="#969696" />
                    </Icon>
                    <Icon size={11}>
                      <path d="M5.5 0v6M3 3.5 5.5 6 8 3.5M1 7.5c2 3 7 3 9 0" stroke="#969696" strokeWidth="1.3" />
                    </Icon>
                    <Icon size={11}>
                      <path d="M4 1.5a4.5 4.5 0 0 0-1 7.5M7 9.500a4.500 4.500 0 0 0 1-7.500" stroke="#969696" strokeWidth="1.300" />
                    </Icon>
                    <Icon size={11}>
                      <path d="M.5.5h10v10H.5zM.5 5.5h5v5" stroke="#969696" />
                    </Icon>
                  </div>
                </div>
                <Viewport />
                <Ruler />
                <Transport />
                <div className="flex min-h-[89px] border-t border-[#4a4a4a]">
                  <section className="min-w-0 flex-1">
                    <div className="flex h-4 items-center gap-[7px] border-b border-[#4a4a4a] pl-1">
                      <Burger />
                      <Menu items={materialMenu} />
                    </div>
                  </section>
                  <Coordinates />
                </div>
              </div>
            </div>
          </main>

          <aside className="flex w-[272px] shrink-0 flex-col border-l border-[#4d4d4d]">
            <ObjectManager />
            <AttributeManager />
          </aside>
          <div className="flex w-4 shrink-0 flex-col bg-[#333333]">
            <div className="flex min-h-[200px] flex-1 flex-col">
              <SideTab active className="h-[26px]">对象</SideTab>
              <SideTab className="h-[26px]">场次</SideTab>
              <SideTab className="h-[46px]">内容浏览器</SideTab>
            </div>
            <div className="min-h-[288px]">
              <SideTab active className="h-[26px]">属性</SideTab>
              <SideTab className="h-[16px]">层</SideTab>
              <SideTab className="h-[24px]">构造</SideTab>
            </div>
          </div>
        </div>

        <footer className="flex h-4 items-center gap-2 border-t border-[#4a4a4a] pl-[3px] text-[#bcbcbc]">
          <Burger />
          移动: 点击并拖动鼠标移动元素。按住 SHIFT 键量化移动; 节点编辑模式时按住 SHIFT 键增加选择对象; 按住 CTRL 键减少选择对象。
        </footer>
      </div>

      <div className="pointer-events-none absolute bottom-[24px] right-[30px] flex items-center gap-3 whitespace-nowrap text-[31px] leading-[44px] text-white [text-shadow:1px_2px_2px_rgba(0,0,0,0.6)]">
        <span className="text-[32px] font-bold">知乎</span>
        <span>@灰色执照</span>
      </div>
    </div>
  );
}
